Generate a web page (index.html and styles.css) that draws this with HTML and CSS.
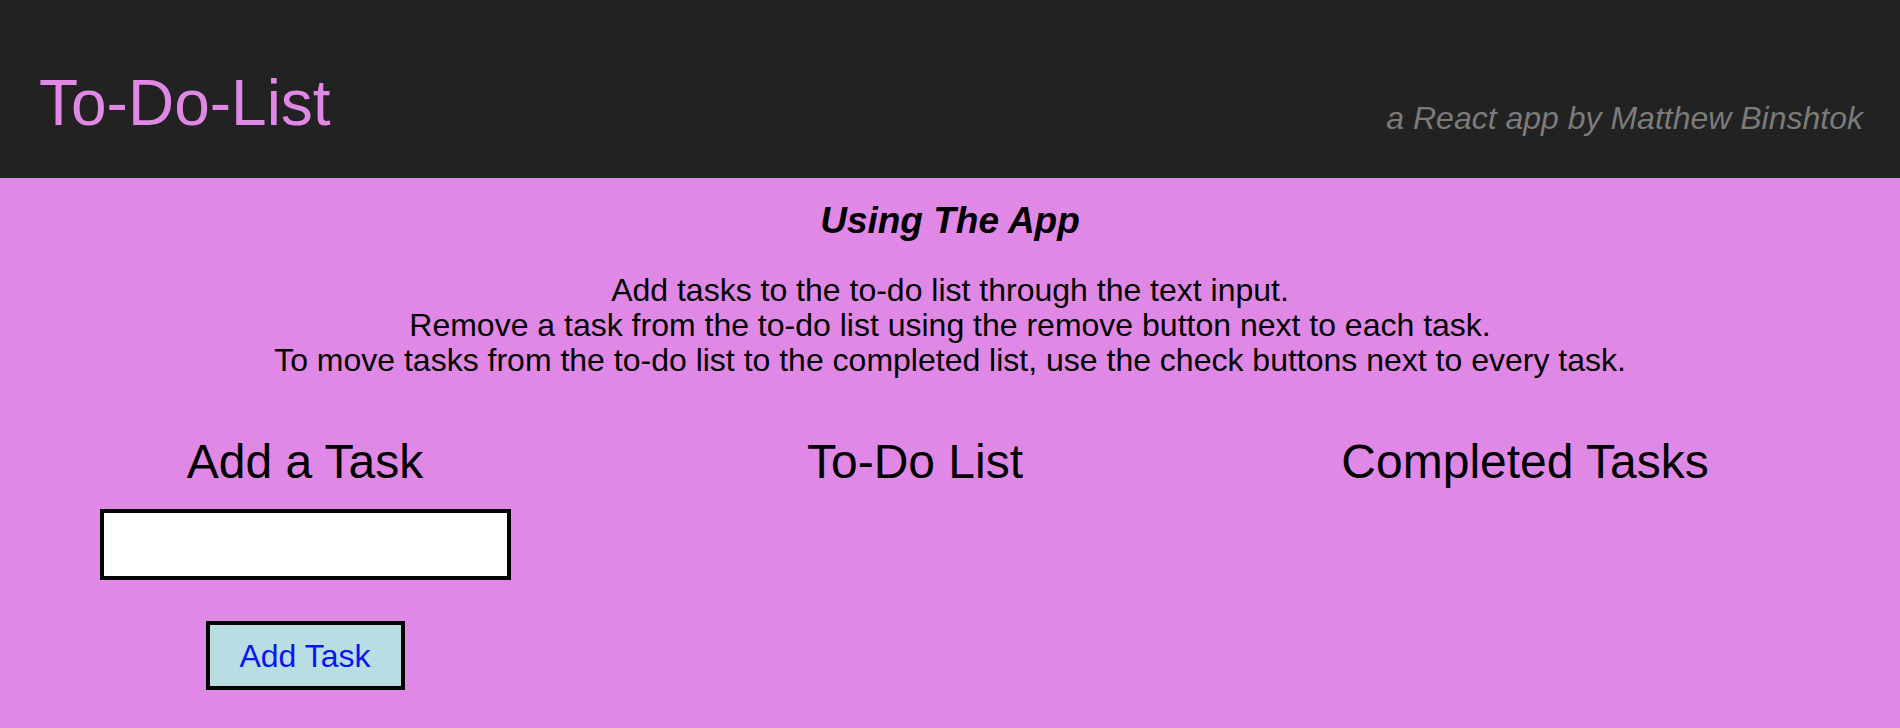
FILE: index.html
```html
<!DOCTYPE html>
<html lang="en">
<head>
<meta charset="utf-8">
<title>To-Do-List</title>
<link rel="stylesheet" href="styles.css">
</head>
<body>
<header class="app-header">
  <h1 class="app-title">To-Do-List</h1>
  <p class="app-byline">a React app by Matthew Binshtok</p>
</header>
<main class="app-main">
  <section class="intro">
    <h2 class="intro-title">Using The App</h2>
    <p class="intro-text">Add tasks to the to-do list through the text input.<br>Remove a task from the to-do list using the remove button next to each task.<br>To move tasks from the to-do list to the completed list, use the check buttons next to every task.</p>
  </section>
  <section class="columns">
    <div class="column">
      <h3 class="column-title">Add a Task</h3>
      <input class="task-input" type="text">
      <button class="add-button" type="button">Add Task</button>
    </div>
    <div class="column">
      <h3 class="column-title">To-Do List</h3>
    </div>
    <div class="column">
      <h3 class="column-title">Completed Tasks</h3>
    </div>
  </section>
</main>
</body>
</html>
```
FILE: styles.css
```css
html, body {
  margin: 0;
  padding: 0;
  height: 100%;
}
body {
  background: #e088e6;
  font-family: "Liberation Sans", Arial, Helvetica, sans-serif;
  color: #000;
}
.app-header {
  height: 178px;
  box-sizing: border-box;
  background: #222222;
  display: flex;
  justify-content: space-between;
  align-items: flex-start;
  padding: 71px 37px 0 39px;
}
.app-title {
  margin: 0;
  font-size: 64px;
  line-height: 64px;
  font-weight: normal;
  color: #e088e6;
}
.app-byline {
  margin: 31px 0 0 0;
  font-size: 32px;
  line-height: 32px;
  font-style: italic;
  color: #7b7b7b;
}
.app-main {
  background: #e088e6;
  padding-top: 24px;
}
.intro {
  text-align: center;
}
.intro-title {
  margin: 0;
  font-size: 37px;
  line-height: 37px;
  font-weight: bold;
  font-style: italic;
}
.intro-text {
  margin: 34px 0 0 0;
  font-size: 32px;
  line-height: 35px;
}
.columns {
  display: grid;
  grid-template-columns: repeat(3, 610px);
  margin-top: 57px;
}
.column {
  display: flex;
  flex-direction: column;
  align-items: center;
}
.column-title {
  margin: 0;
  font-size: 48px;
  line-height: 54px;
  font-weight: normal;
}
.task-input {
  box-sizing: border-box;
  width: 411px;
  height: 71px;
  margin-top: 20px;
  border: 4px solid #000;
  background: #fff;
  padding: 0 8px;
  font-family: inherit;
  font-size: 28px;
  outline: none;
}
.add-button {
  box-sizing: border-box;
  width: 199px;
  height: 69px;
  margin-top: 41px;
  border: 4px solid #000;
  background: #b8dee4;
  color: #0a14f5;
  font-family: inherit;
  font-size: 32px;
  line-height: 1;
  padding: 0;
  display: flex;
  align-items: center;
  justify-content: center;
}
```
